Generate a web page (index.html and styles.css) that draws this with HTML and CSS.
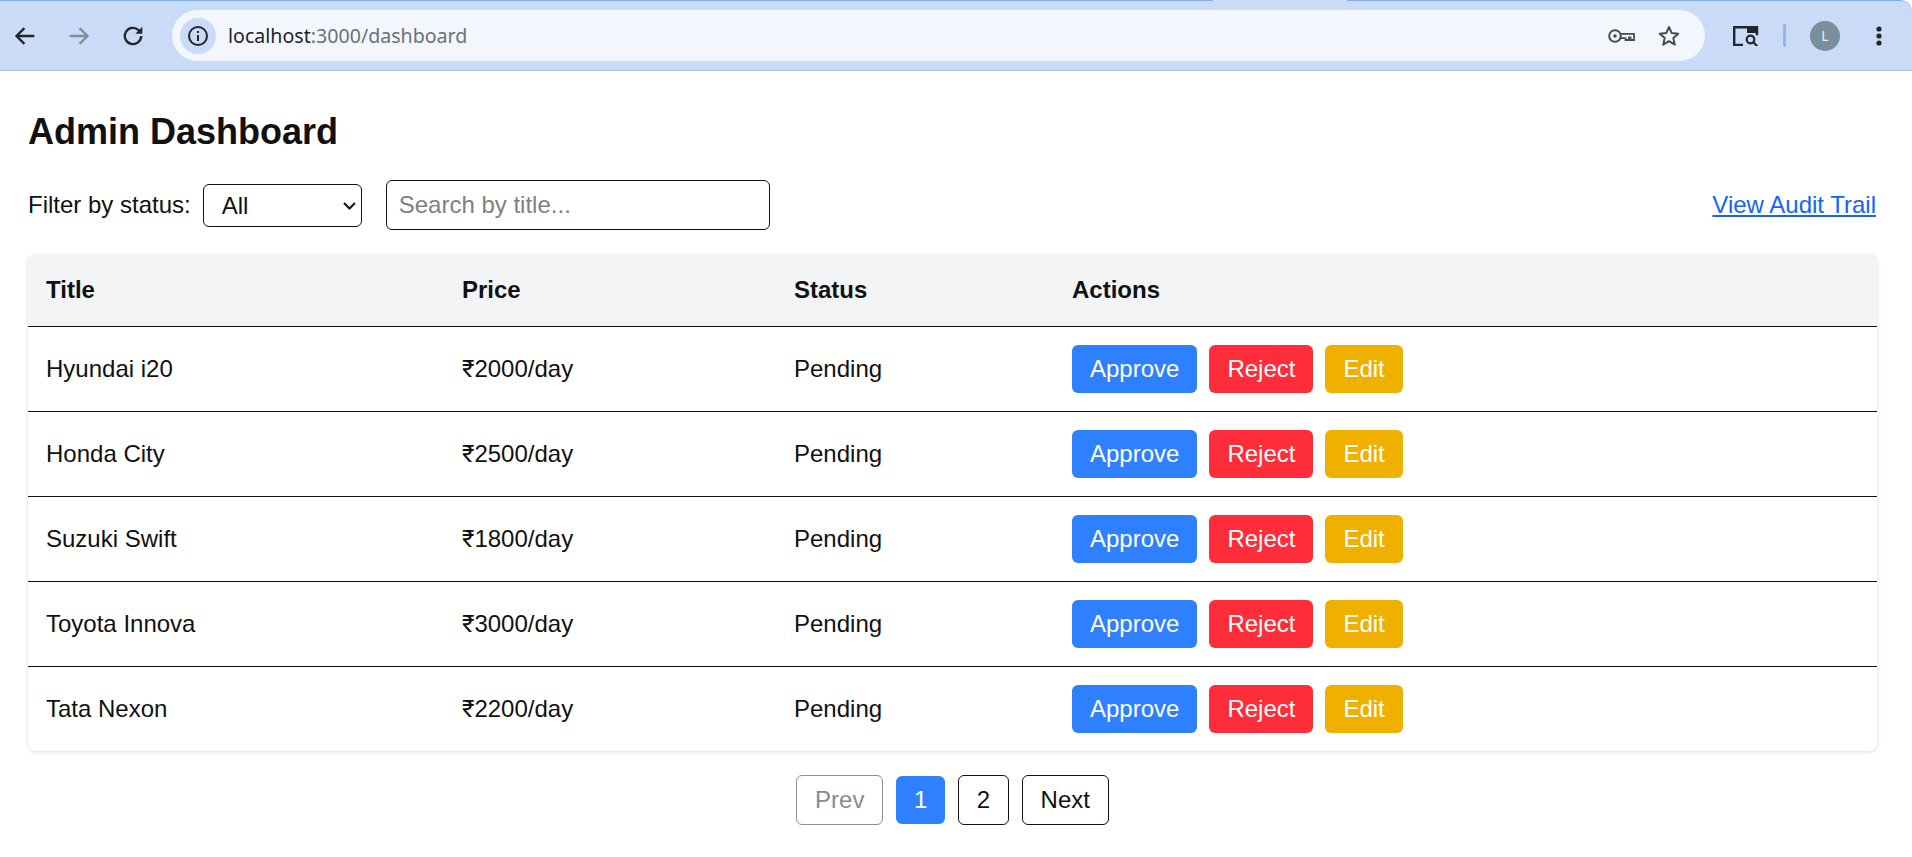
FILE: index.html
```html
<!DOCTYPE html>
<html lang="en">
<head>
<meta charset="utf-8">
<title>Admin Dashboard</title>
<link rel="stylesheet" href="styles.css">
</head>
<body>
<header class="chrome">
  <span class="tab-gap"></span>
  <button class="nav-btn" aria-label="Back"><svg class="ic" viewBox="0 0 24 24"><path d="M20 12H5M11.5 5.2 4.7 12l6.800 6.800" fill="none" stroke="#22262b" stroke-width="2"/></svg></button>
  <button class="nav-btn" aria-label="Forward"><svg class="ic" viewBox="0 0 24 24"><path d="M4 12h15M12.500 5.200l6.800 6.800-6.800 6.800" fill="none" stroke="#868e9c" stroke-width="2"/></svg></button>
  <button class="nav-btn" aria-label="Reload"><svg class="ic" viewBox="0 0 24 24"><path d="M19 12a7 7 0 1 1-2.200-5.100L19 9" fill="none" stroke="#22262b" stroke-width="2"/><path d="M20 4v6h-6z" fill="#22262b"/></svg></button>
  <div class="omnibox">
    <span class="info-chip"><svg class="ic-small" viewBox="0 0 24 24"><circle cx="12" cy="12" r="9" fill="none" stroke="#22262b" stroke-width="2"/><path d="M12 11v6M12 7v2" stroke="#22262b" stroke-width="2"/></svg></span>
    <span class="url"><span class="host">localhost</span>:3000/dashboard</span>
    <svg class="key" viewBox="0 0 27 14"><circle cx="7" cy="7" r="5.800" fill="none" stroke="#474b52" stroke-width="2"/><circle cx="7" cy="7" r="1.800" fill="#474b52"/><path d="M12.500 4.800H26V11h-3.500V8.500h-1.500V11h-3.500V9.200h-5" fill="none" stroke="#474b52" stroke-width="1.800"/></svg>
    <svg class="star" viewBox="0 0 24 24"><path d="M12 3l2.700 6.100 6.600.6-5 4.400 1.500 6.500L12 17.200l-5.800 3.400 1.500-6.500-5-4.400 6.600-.6z" fill="none" stroke="#474b52" stroke-width="2" stroke-linejoin="round"/></svg>
  </div>
  <svg class="lens" viewBox="0 0 26 20"><path d="M10 19H1.200V1.200H24v8" fill="none" stroke="#22262b" stroke-width="2.400"/><path d="M14 0h11v7H14z" fill="#22262b"/><circle cx="17.500" cy="13.500" r="3.800" fill="none" stroke="#22262b" stroke-width="2.200"/><path d="M20.300 16.300l4 3.700" stroke="#22262b" stroke-width="2.200"/></svg>
  <span class="divider"></span>
  <span class="avatar">L</span>
  <svg class="kebab" viewBox="0 0 6 20"><circle cx="3" cy="3" r="2.600"/><circle cx="3" cy="10" r="2.600"/><circle cx="3" cy="17" r="2.600"/></svg>
</header>

<main class="page">
  <h1 class="title">Admin Dashboard</h1>
  <div class="filters">
    <label class="filter-label" for="status">Filter by status:</label>
    <span class="select-wrap">
      <select class="status-select" id="status">
        <option>All</option>
        <option>Pending</option>
        <option>Approved</option>
        <option>Rejected</option>
      </select>
      <svg class="chevron" viewBox="0 0 13 8"><path d="M1 1l5.500 5.500L12 1" fill="none" stroke="#111" stroke-width="2"/></svg>
    </span>
    <input class="search" type="text" placeholder="Search by title...">
    <a class="audit-link" href="#">View Audit Trail</a>
  </div>

  <div class="table-card">
    <table class="listings">
      <colgroup>
        <col class="col-title"><col class="col-price"><col class="col-status"><col>
      </colgroup>
      <thead>
        <tr><th>Title</th><th>Price</th><th>Status</th><th>Actions</th></tr>
      </thead>
      <tbody>
        <tr><td>Hyundai i20</td><td><span class="rupee">₹</span>2000/day</td><td>Pending</td><td><div class="actions"><button class="btn approve">Approve</button><button class="btn reject">Reject</button><button class="btn edit">Edit</button></div></td></tr>
        <tr><td>Honda City</td><td><span class="rupee">₹</span>2500/day</td><td>Pending</td><td><div class="actions"><button class="btn approve">Approve</button><button class="btn reject">Reject</button><button class="btn edit">Edit</button></div></td></tr>
        <tr><td>Suzuki Swift</td><td><span class="rupee">₹</span>1800/day</td><td>Pending</td><td><div class="actions"><button class="btn approve">Approve</button><button class="btn reject">Reject</button><button class="btn edit">Edit</button></div></td></tr>
        <tr><td>Toyota Innova</td><td><span class="rupee">₹</span>3000/day</td><td>Pending</td><td><div class="actions"><button class="btn approve">Approve</button><button class="btn reject">Reject</button><button class="btn edit">Edit</button></div></td></tr>
        <tr><td>Tata Nexon</td><td><span class="rupee">₹</span>2200/day</td><td>Pending</td><td><div class="actions"><button class="btn approve">Approve</button><button class="btn reject">Reject</button><button class="btn edit">Edit</button></div></td></tr>
      </tbody>
    </table>
  </div>

  <nav class="pager">
    <button class="pg disabled">Prev</button>
    <button class="pg current">1</button>
    <button class="pg">2</button>
    <button class="pg">Next</button>
  </nav>
</main>
</body>
</html>
```
FILE: styles.css
```css
* { box-sizing: border-box; }
html, body { margin: 0; background: #fff; }
body { font-family: "Liberation Sans", Arial, sans-serif; color: #111; overflow: hidden; height: 857px; }

.chrome {
  position: relative;
  height: 71px;
  display: flex;
  align-items: center;
  background: #c9dbf6;
  border-top: 1px solid #7fadee;
  border-bottom: 1px solid #a9bcdc;
  border-top-right-radius: 12px;
}
.tab-gap { position: absolute; left: 1213px; top: -1px; width: 134px; height: 1px; background: #c9dbf6; }
.nav-btn { width: 54px; height: 40px; padding: 0; border: 0; background: none; display: flex; align-items: center; justify-content: center; }
.nav-btn:first-of-type { margin-left: -2px; }
.ic { width: 28px; height: 28px; }
.omnibox {
  width: 1533px;
  height: 51px;
  margin-left: 12px;
  border-radius: 26px;
  background: #f3f7fd;
  display: flex;
  align-items: center;
  padding-left: 8px;
}
.info-chip { width: 36px; height: 36px; border-radius: 50%; background: #c9dbf6; display: flex; align-items: center; justify-content: center; }
.ic-small { width: 24px; height: 24px; }
.url { margin-left: 12px; font: 19.6px "Noto Sans", sans-serif; color: #6b7078; flex: 1; }
.host { color: #1f2329; }
.key { width: 27px; height: 14px; margin-right: 22px; }
.star { width: 24px; height: 24px; margin-right: 24px; }
.lens { width: 26px; height: 20px; margin-left: 28px; }
.divider { width: 3px; height: 23px; margin-left: 24px; background: #8fb6ee; border-radius: 2px; }
.avatar { width: 30px; height: 30px; margin-left: 24px; border-radius: 50%; background: #7a8f9c; color: #e6edf0; font: 14px "Noto Sans", sans-serif; display: flex; align-items: center; justify-content: center; }
.kebab { width: 6px; height: 20px; margin-left: 36px; fill: #22262b; }

.page { padding: 0 35px 0 28px; }
.title { margin: 0; padding-top: 40px; font-size: 36px; line-height: 41px; font-weight: 700; color: #111; }
.filters { display: flex; align-items: center; margin-top: 28px; font-size: 24px; height: 50px; }
.filter-label { margin-right: 12px; }
.select-wrap { position: relative; display: flex; margin-top: 1px; }
.status-select { appearance: none; width: 159px; height: 43px; padding: 0 8px 0 18px; font: 24px "Liberation Sans", sans-serif; color: #111; background: #fff; border: 1.3px solid #111; border-radius: 6px; }
.chevron { position: absolute; right: 6px; top: 18px; width: 13px; height: 8px; pointer-events: none; }
.search { width: 384px; height: 50px; margin-left: 24px; padding: 0 12px; font: 24px "Liberation Sans", sans-serif; background: #fff; border: 1.3px solid #111; border-radius: 6px; }
.search::placeholder { color: #808080; }
.audit-link { margin-left: auto; margin-right: 1px; color: #1463ff; }

.table-card { margin-top: 24px; background: #fff; border-radius: 8px; overflow: hidden; box-shadow: 0 1px 4px rgba(0,0,0,.14); }
.listings { width: 100%; table-layout: fixed; border-collapse: collapse; font-size: 24px; line-height: 28px; }
.rupee { font-family: Roboto, sans-serif; }
.col-title { width: 416px; }
.col-price { width: 332px; }
.col-status { width: 278px; }
.listings th { height: 72px; padding: 0 18px; text-align: left; font-weight: 700; background: #f3f4f6; border-bottom: 1.3px solid #111; }
.listings td { height: 85px; padding: 0 18px; border-bottom: 1.3px solid #111; }
.listings tbody tr:last-child td { border-bottom: 0; }
.actions { display: flex; gap: 12px; }
.btn { height: 48px; padding: 0 18px; border: 0; border-radius: 6px; color: #fff; font: 24px "Liberation Sans", sans-serif; }
.approve { background: #2f80ff; }
.reject { background: #ff2d3a; }
.edit { background: #f0b000; }

.pager { display: flex; justify-content: center; align-items: center; gap: 12.5px; margin-top: 24px; }
.pg { height: 50px; padding: 0 18px; background: #fff; border: 1.3px solid #111; border-radius: 6px; color: #111; font: 24px "Liberation Sans", sans-serif; }
.pg.disabled { color: #8a8a8a; border-color: #8f8f8f; }
.pg.current { height: 48px; background: #2f80ff; color: #fff; border: 0; }
```
